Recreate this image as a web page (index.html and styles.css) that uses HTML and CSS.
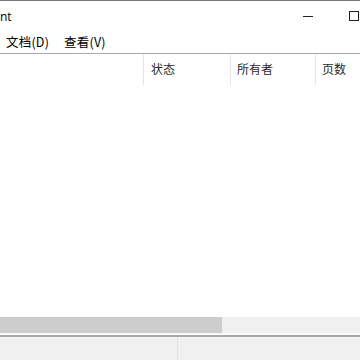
FILE: index.html
```html
<!DOCTYPE html>
<html lang="zh-CN">

<head>
    <meta charset="UTF-8">
    <title>nt</title>
    <link rel="stylesheet" href="styles.css">
</head>

<body>
    <div class="window">
        <!-- Title bar -->
        <div class="titlebar">
            <span class="title">nt</span>
            <div class="controls">
                <div class="ctl"><span class="ico-min"></span></div>
                <div class="ctl ctl-clip"><span class="ico-max"></span></div>
            </div>
        </div>

        <!-- Menu -->
        <div class="menubar">
            <span class="menu-item">文档(D)</span>
            <span class="menu-item">查看(V)</span>
        </div>

        <!-- List view -->
        <div class="list">
            <div class="header">
                <div class="col col-name"></div>
                <div class="col col-status">状态</div>
                <div class="col col-owner">所有者</div>
                <div class="col col-pages">页数</div>
            </div>
            <div class="rows"></div>
        </div>

        <div class="hscroll">
            <div class="thumb"></div>
        </div>

        <div class="statusbar">
            <div class="pane"></div>
            <div class="pane"></div>
        </div>
    </div>
</body>

</html>
```

FILE: styles.css
```css
* {
    margin: 0;
    padding: 0;
    box-sizing: border-box;
}

body {
    width: 360px;
    height: 360px;
    overflow: hidden;
    background: #fff;
    font-family: "Noto Sans CJK SC", sans-serif;
    font-size: 12px;
    color: #1a1a1a;
}

.window {
    width: 360px;
    height: 360px;
    display: flex;
    flex-direction: column;
    border-top: 1px solid #7a7a7a;
    overflow: hidden;
}

.titlebar {
    height: 29px;
    display: flex;
    align-items: center;
    flex-shrink: 0;
}

.title {
    flex: 1;
    font-family: "Open Sans", sans-serif;
    font-size: 12px;
    line-height: 29px;
    color: #000;
    padding-top: 1px;
}

.controls {
    display: flex;
    height: 29px;
}

.ctl {
    width: 46px;
    height: 29px;
    display: flex;
    align-items: center;
    justify-content: center;
}

/* maximize button is cut by the screen edge */
.ctl-clip {
    width: 29px;
    justify-content: flex-start;
    padding-left: 18px;
}

.ico-min {
    width: 10px;
    height: 1px;
    background: #222;
    margin-top: 1px;
}

.ico-max {
    width: 10px;
    height: 10px;
    border: 1px solid #222;
    margin-top: 1px;
}

.menubar {
    display: flex;
    align-items: center;
    flex-shrink: 0;
    border-bottom: 1px solid #a9a9a9;
    height: 24px;
}

.menu-item {
    padding: 0 7px 0 6px;
    line-height: 23px;
    font-size: 12.5px;
    letter-spacing: 0.2px;
    color: #000;
}

.menu-item + .menu-item {
    padding-left: 8px;
}

.list {
    flex: 1;
    display: flex;
    flex-direction: column;
    background: #fff;
}

.header {
    display: flex;
    height: 31px;
    flex-shrink: 0;
}

.col {
    height: 100%;
    padding-left: 7px;
    line-height: 30px;
    color: #2a2a2a;
    border-right: 1px solid #e5e5e5;
    white-space: nowrap;
    flex-shrink: 0;
}

.col-name {
    width: 144px;
}

.col-status {
    width: 87px;
}

.col-owner {
    width: 85px;
    padding-left: 6px;
}

.col-pages {
    width: 70px;
    padding-left: 6px;
}

.rows {
    flex: 1;
}

.hscroll {
    background: #f0f0f0;
    flex-shrink: 0;
    border-bottom: 2px solid #fafafa;
    height: 18px;
}

.thumb {
    width: 222px;
    height: 16px;
    background: #cdcdcd;
}

.statusbar {
    height: 25px;
    flex-shrink: 0;
    display: flex;
    background: #f0f0f0;
    border-top: 2px solid #a8a8a8;
}

.pane {
    height: 100%;
    border-top: 1px solid #f6f6f6;
}

.pane:first-child {
    width: 178px;
    border-right: 1px solid #e2e2e2;
}

.pane:last-child {
    flex: 1;
}
```
